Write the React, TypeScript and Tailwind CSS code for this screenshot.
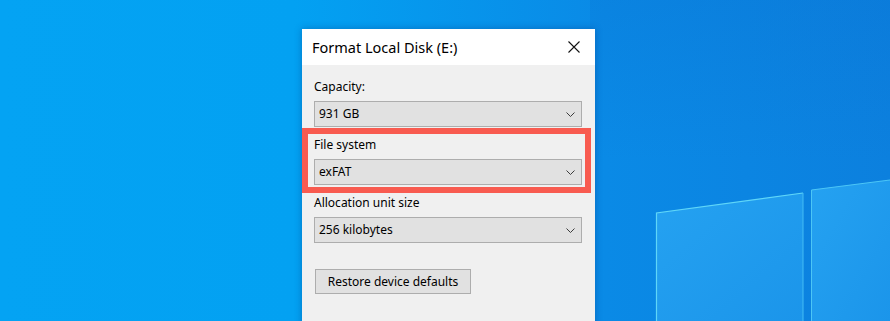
import React from "react";

const font = { fontFamily: '"Noto Sans", "Segoe UI", "Liberation Sans", sans-serif' };

function Chevron() {
  return (
    <svg width="9" height="5" viewBox="0 0 9 5" className="shrink-0">
      <path d="M0.5 0.5 L4.5 4.5 L8.5 0.5" fill="none" stroke="#3c3c3c" strokeWidth="1" />
    </svg>
  );
}

function Select({ value }: { value: string }) {
  return (
    <div className="flex h-[26px] items-center justify-between border border-[#adadad] bg-[#e1e1e1] pl-[4px] pr-[6px]">
      <span className="text-[12px] leading-4 text-black">{value}</span>
      <Chevron />
    </div>
  );
}

function Field({ label, value }: { label: string; value: string }) {
  return (
    <div className="flex flex-col">
      <div className="mb-[6px] h-4 text-[12px] leading-4 text-black">{label}</div>
      <Select value={value} />
    </div>
  );
}

function Wallpaper() {
  return (
    <svg className="absolute inset-0" width="890" height="321" viewBox="0 0 890 321">
      <defs>
        <linearGradient id="bg" x1="0" y1="0" x2="1" y2="0">
          <stop offset="0" stopColor="#04a3f3" />
          <stop offset="0.33" stopColor="#03a1f2" />
          <stop offset="0.68" stopColor="#0a8ae6" />
          <stop offset="1" stopColor="#0c80de" />
        </linearGradient>
        <linearGradient id="top" x1="0" y1="0" x2="0" y2="1">
          <stop offset="0" stopColor="#0a70d0" stopOpacity="0.25" />
          <stop offset="0.5" stopColor="#0a70d0" stopOpacity="0" />
        </linearGradient>
        <linearGradient id="pane" x1="0" y1="0" x2="1" y2="1">
          <stop offset="0" stopColor="#25a2f1" />
          <stop offset="1" stopColor="#1b95ea" />
        </linearGradient>
      </defs>
      <rect width="890" height="321" fill="url(#bg)" />
      <rect x="590" width="300" height="321" fill="url(#top)" />
      <polygon points="656,213 803,193 803,321 656,321" fill="url(#pane)" />
      <polygon points="811,190 890,180 890,321 811,321" fill="url(#pane)" />
      <polyline points="656.5,321 656.5,213 803,193" fill="none" stroke="#5fd6f8" strokeWidth="1.2" />
      <polyline points="803,193 803,321" fill="none" stroke="#44bdf4" strokeWidth="1" />
      <polyline points="811.5,321 811.5,190 890,180" fill="none" stroke="#4cc6f6" strokeWidth="1" />
    </svg>
  );
}

export default function App() {
  return (
    <div className="relative h-[321px] w-[890px] overflow-hidden" style={font}>
      <Wallpaper />
      <div className="relative ml-[302px] mt-[29px] w-[293px] bg-[#f0f0f0] shadow-[0_0_7px_rgba(0,40,110,0.35)]">
        <div className="flex h-[36px] items-center justify-between bg-white pl-[10px] pr-[15px]">
          <span className="text-[14.5px] leading-5 text-black">Format Local Disk (E:)</span>
          <svg width="12" height="12" viewBox="0 0 12 12">
            <path d="M0.5 0.5 L11.5 11.5 M11.5 0.5 L0.5 11.5" stroke="#111" strokeWidth="1.1" />
          </svg>
        </div>
        <div className="flex flex-col gap-[10px] pb-[40px] pl-[12px] pr-[13px] pt-[14px]">
          <Field label="Capacity:" value="931 GB" />
          <div className="relative">
            <Field label="File system" value="exFAT" />
            <div className="pointer-events-none absolute -left-[12px] -right-[9px] -top-[9px] -bottom-[8px] border-[6px] border-[#f85b50]" />
          </div>
          <Field label="Allocation unit size" value="256 kilobytes" />
          <div className="mt-[16px] flex">
            <div className="ml-[1px] flex h-[25px] w-[156px] items-center justify-center border border-[#adadad] bg-[#e1e1e1] text-[12px] leading-4 text-black">
              Restore device defaults
            </div>
          </div>
        </div>
      </div>
    </div>
  );
}
